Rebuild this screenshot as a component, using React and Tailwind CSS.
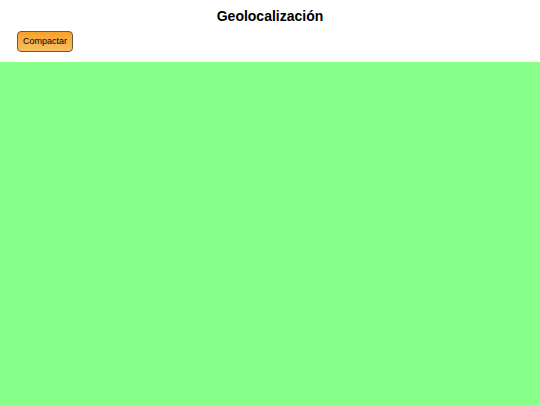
import React from "react";

const App = () => {
  return (
    <div className="w-[540px] h-[405px] flex flex-col bg-white font-['Liberation_Sans',Arial,sans-serif]">
      <div className="h-[62px] flex flex-col">
        <h1 className="pt-[8px] text-center text-[14px] leading-[16px] font-bold text-black">
          Geolocalización
        </h1>
        <div className="flex pl-[17px] mt-[7px]">
          <button className="h-[21px] px-[5px] text-[9px] leading-none text-black rounded-[4px] border border-[#6b5a3a] bg-gradient-to-b from-[#f7a226] to-[#f9be62]">
            Compactar
          </button>
        </div>
      </div>
      <div className="flex-1 bg-[#88ff88]" />
    </div>
  );
};

export default App;
